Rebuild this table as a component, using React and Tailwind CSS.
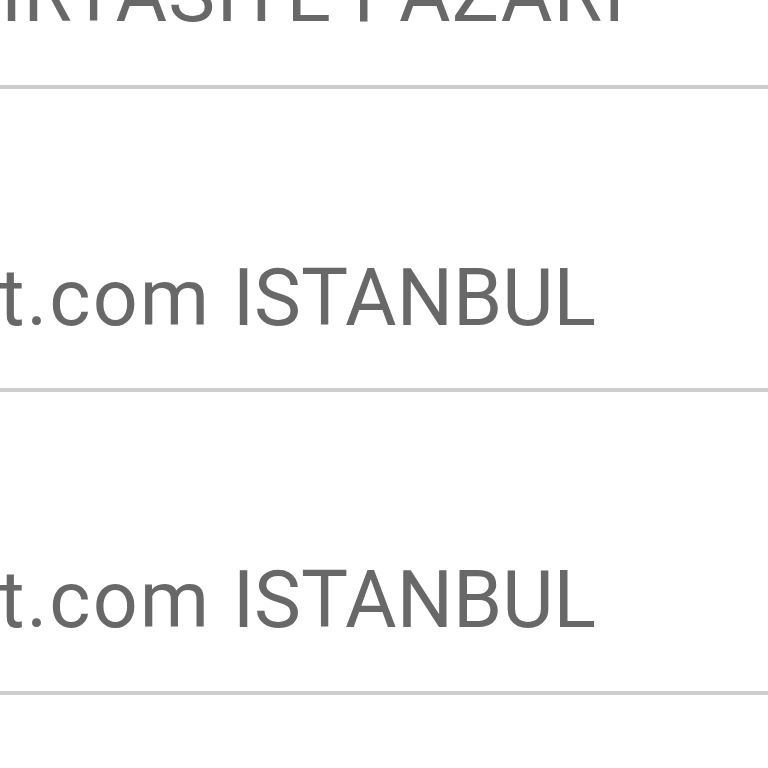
export default function App() {
  const font = { fontFamily: 'Roboto, "Noto Sans", sans-serif' };
  return (
    <div className="w-[768px] h-[768px] overflow-hidden bg-white flex flex-col" style={font}>
      <div className="h-[89px] shrink-0 border-b-4 border-[#cdcdcd] flex items-end pb-[51px]">
        <div className="w-[625px] shrink-0 flex justify-end">
          <span className="whitespace-nowrap text-[79px] leading-none text-[#686868] tracking-[1.2px]">KIRTASIYE PAZAR</span>
          <span className="whitespace-nowrap text-[79px] leading-none text-[#686868]">I</span>
        </div>
      </div>
      <div className="h-[303px] shrink-0 border-b-4 border-[#cdcdcd] flex items-end pb-[50px]">
        <div className="w-[596px] shrink-0 flex justify-end">
          <span className="whitespace-pre text-[79px] leading-none text-[#686868] tracking-[2px]">www.kirtasiyemart.com </span>
          <span className="whitespace-nowrap text-[79px] leading-none text-[#686868]">ISTANBUL</span>
        </div>
      </div>
      <div className="h-[303px] shrink-0 border-b-4 border-[#cdcdcd] flex items-end pb-[51px]">
        <div className="w-[596px] shrink-0 flex justify-end">
          <span className="whitespace-pre text-[79px] leading-none text-[#686868] tracking-[2px]">www.kirtasiyemart.com </span>
          <span className="whitespace-nowrap text-[79px] leading-none text-[#686868]">ISTANBUL</span>
        </div>
      </div>
    </div>
  );
}
